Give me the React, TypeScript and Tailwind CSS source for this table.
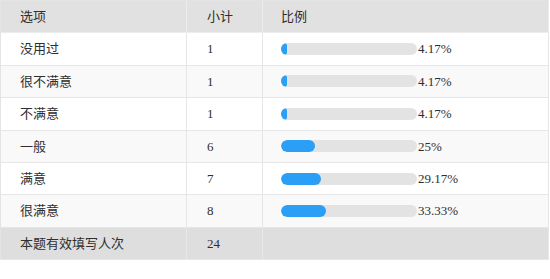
import React from "react";

const rows = [
  { label: "没用过", count: "1", pct: 4.17, text: "4.17%" },
  { label: "很不满意", count: "1", pct: 4.17, text: "4.17%" },
  { label: "不满意", count: "1", pct: 4.17, text: "4.17%" },
  { label: "一般", count: "6", pct: 25, text: "25%" },
  { label: "满意", count: "7", pct: 29.17, text: "29.17%" },
  { label: "很满意", count: "8", pct: 33.33, text: "33.33%" },
];

const font = { fontFamily: '"Liberation Serif", "Noto Sans CJK SC", serif' };

export default function App() {
  return (
    <div className="w-[550px] h-[279px] bg-white text-[13px] text-[#2f2f2f]" style={font}>
      <div className="w-[549px] border-t border-l border-[#e4e4e4] grid grid-cols-[186px_76px_286px]">
        <div className="h-[32.4px] flex items-center pl-[19px] bg-[#e1e1e1] border-r border-b border-[#ececec]">选项</div>
        <div className="h-[32.4px] flex items-center pl-5 bg-[#e1e1e1] border-r border-b border-[#ececec]">小计</div>
        <div className="h-[32.4px] flex items-center pl-[18px] bg-[#e1e1e1] border-r border-b border-[#ececec]">比例</div>
        {rows.map((r, i) => {
          const bg = i % 2 === 0 ? "bg-white" : "bg-[#f9f9f9]";
          return (
            <React.Fragment key={r.label}>
              <div className={`h-[32.4px] flex items-center pl-[19px] border-r border-b border-[#e6e6e6] ${bg}`}>{r.label}</div>
              <div className={`h-[32.4px] flex items-center pl-5 border-r border-b border-[#e6e6e6] ${bg}`}>{r.count}</div>
              <div className={`h-[32.4px] flex items-center pl-[18px] border-r border-b border-[#e6e6e6] ${bg}`}>
                <div className="w-[136px] h-[12px] rounded-full bg-[#e3e3e3] overflow-hidden">
                  <div className="h-full rounded-full bg-[#2a9ff5]" style={{ width: `${r.pct}%` }} />
                </div>
                <span className="ml-[1px]">{r.text}</span>
              </div>
            </React.Fragment>
          );
        })}
        <div className="h-[32.4px] flex items-center pl-[19px] bg-[#dedede] border-r border-b border-[#e8e8e8]">本题有效填写人次</div>
        <div className="h-[32.4px] flex items-center pl-5 bg-[#dedede] border-r border-b border-[#e8e8e8]">24</div>
        <div className="h-[32.4px] bg-[#dedede] border-r border-b border-[#e8e8e8]" />
      </div>
    </div>
  );
}
